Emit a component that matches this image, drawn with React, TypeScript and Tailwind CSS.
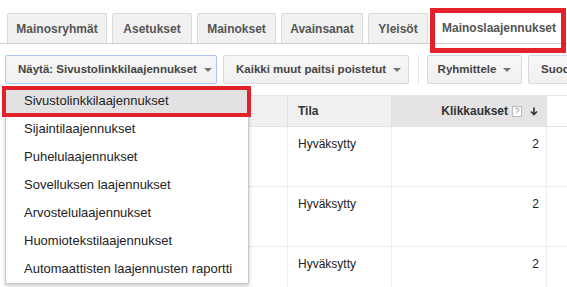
import React from 'react';

const tabs = [
  { label: 'Mainosryhmät', w: 'w-[100px]' },
  { label: 'Asetukset', w: 'w-[80px]' },
  { label: 'Mainokset', w: 'w-[79px]' },
  { label: 'Avainsanat', w: 'w-[82px]' },
  { label: 'Yleisöt', w: 'w-[60px]' },
];

const menuItems = [
  'Sivustolinkkilaajennukset',
  'Sijaintilaajennukset',
  'Puhelulaajennukset',
  'Sovelluksen laajennukset',
  'Arvostelulaajennukset',
  'Huomiotekstilaajennukset',
  'Automaattisten laajennusten raportti',
];

function Caret() {
  return <span className="ml-[7px] inline-block border-x-[4px] border-t-[4px] border-x-transparent border-t-[#777]" />;
}

function ToolButton({ children, className }: { children: React.ReactNode; className: string }) {
  return (
    <div
      className={`h-[29px] shrink-0 whitespace-nowrap flex items-center rounded-[2px] border bg-gradient-to-b from-[#f7f7f7] to-[#f0f0f0] text-[11.5px] font-bold text-[#444] ${className}`}
    >
      {children}
    </div>
  );
}

export default function App() {
  return (
    <div className="relative w-[567px] h-[287px] overflow-hidden bg-white font-['Liberation_Sans',Arial,sans-serif]">
      {/* tabs */}
      <div className="flex gap-[5px] pl-[7px] pt-[13px] border-b border-[#cfcfcf]">
        {tabs.map((t) => (
          <div
            key={t.label}
            className={`${t.w} h-[30px] shrink-0 flex items-center justify-center rounded-t-[2px] border border-b-0 border-[#dadada] bg-[#f1f1f1] text-[12px] font-bold text-[#555]`}
          >
            {t.label}
          </div>
        ))}
        <div className="relative ml-[2px] w-[128px] h-[30px] shrink-0 -mb-px flex items-center justify-center bg-white text-[12px] font-bold text-[#555]">
          Mainoslaajennukset
          <div className="absolute left-[-5px] right-[-3px] top-[-5px] bottom-[-10px] border-[5px] border-[#e2212b]" />
        </div>
      </div>

      {/* toolbar */}
      <div className="flex items-center mt-[11px] pl-[5px]">
        <ToolButton className="w-[212px] pl-[12px] border-[#a9c4f5]">
          Näytä: Sivustolinkkilaajennukset
          <Caret />
        </ToolButton>
        <ToolButton className="ml-[6px] w-[186px] pl-[12px] border-[#d9d9d9]">
          Kaikki muut paitsi poistetut
          <Caret />
        </ToolButton>
        <div className="ml-[9px] mr-[8px] w-px h-[29px] shrink-0 bg-[#e5e5e5]" />
        <ToolButton className="w-[95px] justify-center border-[#d9d9d9]">
          Ryhmittele
          <Caret />
        </ToolButton>
        <ToolButton className="ml-[6px] w-[80px] pl-[12px] border-[#d9d9d9]">
          Suodata
        </ToolButton>
      </div>

      {/* table */}
      <div className="mt-[11px] ml-[5px] text-[12px] text-[#222]">
        <div className="flex h-[32px] border-y border-[#e3e3e3]">
          <div className="w-[283px] shrink-0 bg-[#f1f1f1] border-r border-[#e3e3e3]" />
          <div className="w-[104px] shrink-0 bg-[#f1f1f1] border-r border-[#e3e3e3] flex items-center pl-[10px] font-bold text-[#333]">
            Tila
          </div>
          <div className="w-[155px] shrink-0 bg-[#e4e4e4] border-r border-[#e3e3e3] flex items-center justify-end pr-[8px] font-bold text-[#333]">
            Klikkaukset
            <span className="ml-[4px] w-[10px] h-[11px] border border-[#bbb] bg-white text-[9px] leading-[9px] text-[#999] flex items-center justify-center font-normal">
              ?
            </span>
            <svg className="ml-[8px]" width="8" height="9" viewBox="0 0 8 9">
              <path d="M4 0.5v7M1 4.5l3 3 3-3" stroke="#333" strokeWidth="1.6" fill="none" />
            </svg>
          </div>
          <div className="flex-1" />
        </div>
        {[0, 1, 2].map((i) => (
          <div key={i} className="flex h-[60px] border-b border-[#ececec]">
            <div className="w-[283px] shrink-0 border-r border-[#ececec]" />
            <div className="w-[104px] shrink-0 border-r border-[#ececec] pl-[10px] pt-[8px]">Hyväksytty</div>
            <div className="w-[155px] shrink-0 border-r border-[#ececec] pr-[7px] pt-[8px] text-right">2</div>
            <div className="flex-1" />
          </div>
        ))}
      </div>

      {/* dropdown menu */}
      <div className="absolute left-[5px] top-[86px] w-[244px] bg-white border border-[#c8c8c8] shadow-[0_2px_4px_rgba(0,0,0,0.2)] text-[13px] text-[#222]">
        {menuItems.map((item, i) => (
          <div
            key={item}
            className={`relative h-[28px] flex items-center pl-[18px] ${i === 0 ? 'bg-[#e2e2e2]' : ''}`}
          >
            {item}
            {i === 0 && (
              <div className="absolute left-[-4px] right-[-3px] top-[-1px] bottom-[-2px] border-[4px] border-[#e2212b]" />
            )}
          </div>
        ))}
      </div>
    </div>
  );
}
